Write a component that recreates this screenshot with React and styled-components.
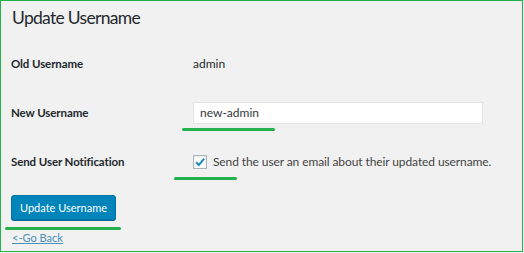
import React from "react";
import styled, { createGlobalStyle } from "styled-components";

const GlobalStyle = createGlobalStyle`
  html, body {
    margin: 0;
    padding: 0;
    background: #f1f1f1;
  }
  body {
    font-family: Lato, "Noto Sans", sans-serif;
    color: #23282d;
  }
`;

const Frame = styled.div`
  box-sizing: border-box;
  width: 523px;
  height: 252px;
  border: 1px solid #22b14c;
  background: #f1f1f1;
  padding: 0 0 0 10px;
  overflow: hidden;
`;

const Title = styled.h1`
  margin: 0;
  padding: 3px 0 0 1px;
  height: 30px;
  font-size: 17.5px;
  font-weight: 400;
  letter-spacing: -0.7px;
  line-height: 27px;
  color: #23282d;
`;

const Form = styled.div`
  display: grid;
  grid-template-columns: 182px 1fr;
  grid-auto-rows: 49px;
  margin-top: 5px;
`;

const Label = styled.div`
  display: flex;
  align-items: center;
  font-size: 11.5px;
  font-weight: 700;
  letter-spacing: -0.1px;
  color: #23282d;
`;

const Cell = styled.div`
  position: relative;
  display: flex;
  align-items: center;
  font-size: 12px;
  color: #23282d;
`;

const TextInput = styled.input`
  box-sizing: border-box;
  width: 290px;
  height: 22px;
  padding: 0 6px;
  border: 1px solid #e3e3e3;
  background: #fff;
  font-family: inherit;
  font-size: 12px;
  color: #32373c;
  outline: none;
`;

const CheckLabel = styled.label`
  display: flex;
  align-items: center;
  gap: 6px;
  color: #444;
  letter-spacing: -0.1px;
`;

const Box = styled.span`
  box-sizing: border-box;
  width: 14px;
  height: 14px;
  border: 1px solid #aab4bb;
  background: #fff;
  box-shadow: inset 0 1px 2px rgba(0, 0, 0, 0.1);
  display: flex;
  align-items: center;
  justify-content: center;
`;

const Mark = styled.span`
  position: absolute;
  height: 3px;
  border-radius: 2px;
  background: #22b14c;
  left: ${(p) => p.$left}px;
  top: ${(p) => p.$top}px;
  width: ${(p) => p.$width}px;
`;

const Footer = styled.div`
  position: relative;
  padding-top: 9px;
`;

const Button = styled.button`
  box-sizing: border-box;
  height: 25px;
  padding: 0 8px;
  border: 1px solid #0073aa;
  border-radius: 3px;
  background: #0085ba;
  box-shadow: 0 1px 0 #006799;
  color: #fff;
  font-family: inherit;
  font-size: 11px;
  line-height: 22px;
  cursor: pointer;
`;

const BackLink = styled.a`
  display: inline-block;
  margin-top: 11px;
  margin-left: 1px;
  font-size: 11px;
  color: #4a8fb8;
  text-decoration: underline;
`;

export default function App() {
  return (
    <>
      <GlobalStyle />
      <Frame>
        <Title>Update Username</Title>
        <Form>
          <Label>Old Username</Label>
          <Cell>admin</Cell>

          <Label>New Username</Label>
          <Cell>
            <TextInput defaultValue="new-admin" />
            <Mark $left={-11} $top={40} $width={93} />
          </Cell>

          <Label>Send User Notification</Label>
          <Cell>
            <CheckLabel>
              <Box>
                <svg width="12" height="12" viewBox="0 0 12 12">
                  <path
                    d="M2 6.2 L4.8 9 L10.2 2.6"
                    fill="none"
                    stroke="#1e8cbe"
                    strokeWidth="2"
                  />
                </svg>
              </Box>
              Send the user an email about their updated username.
            </CheckLabel>
            <Mark $left={-19} $top={40} $width={63} />
          </Cell>
        </Form>
        <Footer>
          <Button>Update Username</Button>
          <Mark $left={-6} $top={41} $width={116} />
          <br />
          <BackLink href="#">&lt;-Go Back</BackLink>
        </Footer>
      </Frame>
    </>
  );
}
